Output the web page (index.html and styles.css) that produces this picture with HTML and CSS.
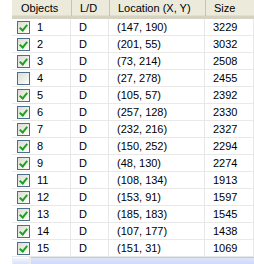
FILE: index.html
```html
<!DOCTYPE html>
<html>
<head>
<meta charset="utf-8">
<link rel="stylesheet" href="styles.css">
</head>
<body>
<div class="view">
  <div class="list">
    <div class="row head">
      <div class="hc">Objects</div>
      <div class="hc">L/D</div>
      <div class="hc">Location (X, Y)</div>
      <div class="hc">Size</div>
    </div>
    <div class="row"><div class="c first"><span class="cb on"></span>1</div><div class="c">D</div><div class="c">(147, 190)</div><div class="c">3229</div></div>
    <div class="row"><div class="c first"><span class="cb on"></span>2</div><div class="c">D</div><div class="c">(201, 55)</div><div class="c">3032</div></div>
    <div class="row"><div class="c first"><span class="cb on"></span>3</div><div class="c">D</div><div class="c">(73, 214)</div><div class="c">2508</div></div>
    <div class="row"><div class="c first"><span class="cb"></span>4</div><div class="c">D</div><div class="c">(27, 278)</div><div class="c">2455</div></div>
    <div class="row"><div class="c first"><span class="cb on"></span>5</div><div class="c">D</div><div class="c">(105, 57)</div><div class="c">2392</div></div>
    <div class="row"><div class="c first"><span class="cb on"></span>6</div><div class="c">D</div><div class="c">(257, 128)</div><div class="c">2330</div></div>
    <div class="row"><div class="c first"><span class="cb on"></span>7</div><div class="c">D</div><div class="c">(232, 216)</div><div class="c">2327</div></div>
    <div class="row"><div class="c first"><span class="cb on"></span>8</div><div class="c">D</div><div class="c">(150, 252)</div><div class="c">2294</div></div>
    <div class="row"><div class="c first"><span class="cb on"></span>9</div><div class="c">D</div><div class="c">(48, 130)</div><div class="c">2274</div></div>
    <div class="row"><div class="c first"><span class="cb on"></span>11</div><div class="c">D</div><div class="c">(108, 134)</div><div class="c">1913</div></div>
    <div class="row"><div class="c first"><span class="cb on"></span>12</div><div class="c">D</div><div class="c">(153, 91)</div><div class="c">1597</div></div>
    <div class="row"><div class="c first"><span class="cb on"></span>13</div><div class="c">D</div><div class="c">(185, 183)</div><div class="c">1545</div></div>
    <div class="row"><div class="c first"><span class="cb on"></span>14</div><div class="c">D</div><div class="c">(107, 177)</div><div class="c">1438</div></div>
    <div class="row"><div class="c first"><span class="cb on"></span>15</div><div class="c">D</div><div class="c">(151, 31)</div><div class="c">1069</div></div>
  </div>
  <div class="hscroll"><div class="btn"></div><div class="thumb"></div></div>
</div>
</body>
</html>
```
FILE: styles.css
```css
html, body {
  margin: 0;
  padding: 0;
  background: #ffffff;
}
body {
  width: 254px;
  height: 264px;
  overflow: hidden;
  font-family: "Liberation Sans", Arial, sans-serif;
  font-size: 11px;
  color: #000;
}
.view {
  padding-left: 12px;
  display: flex;
  flex-direction: column;
}
.list {
  display: flex;
  flex-direction: column;
}
.row {
  display: grid;
  grid-template-columns: 59px 38px 96px 1fr;
  height: 17px;
  border-bottom: 1px solid #e8e8e8;
  box-sizing: border-box;
}
.row.head {
  height: 19px;
  background: #ebeadb;
  border-bottom: 3px solid #d6d2c2;
  box-shadow: inset 0 -1px 0 #e2decd;
}
.hc {
  padding-left: 9px;
  line-height: 16px;
  white-space: nowrap;
}
.hc + .hc {
  border-left: 1px solid #c7c5b2;
  padding-left: 8px;
}
.c {
  padding-left: 8px;
  line-height: 16px;
  white-space: nowrap;
  border-right: 1px solid #e8e8e8;
}
.c.first {
  padding-left: 5px;
  display: flex;
  align-items: center;
  gap: 7px;
}
.cb {
  width: 11px;
  height: 11px;
  border: 1px solid #4d6f8c;
  background: linear-gradient(135deg, #dcdcd6 0%, #f0f0ea 60%, #ffffff 100%);
  position: relative;
  flex: none;
}
.cb.on::after {
  content: "";
  position: absolute;
  left: 3px;
  top: 1px;
  width: 3px;
  height: 6px;
  border-right: 2px solid #21a121;
  border-bottom: 2px solid #21a121;
  transform: rotate(40deg);
}
.hscroll {
  display: flex;
  height: 10px;
  background: #eeede5;
}
.btn {
  width: 16px;
  background: linear-gradient(#f4f6fd, #c9d7f7);
  border-left: 1px solid #e8eefc;
  border-top: 1px solid #ffffff;
}
.thumb {
  flex: 1;
  margin-left: 2px;
  background: linear-gradient(#dde6fb, #c4d3f7);
  border-top: 1px solid #b8c9f2;
}
```
